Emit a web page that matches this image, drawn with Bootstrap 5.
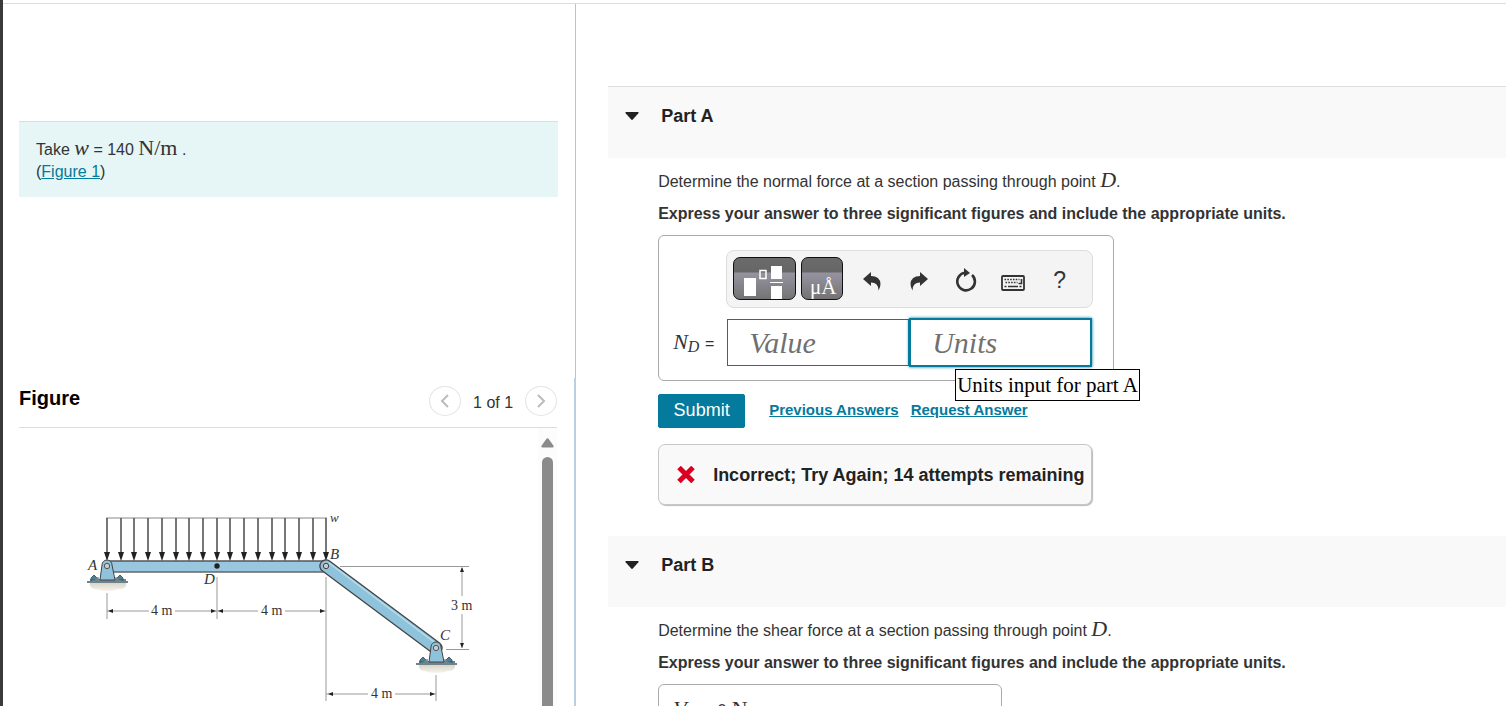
<!DOCTYPE html>
<html lang="en">
<head>
<meta charset="utf-8">
<meta name="viewport" content="width=device-width, initial-scale=1">
<title>Part A - Normal force at D</title>
<link href="https://cdn.jsdelivr.net/npm/bootstrap@5.3.0/dist/css/bootstrap.min.css" rel="stylesheet">
<style>
:root { --teal: #047a9c; }
body { font-family: "Liberation Sans", Arial, sans-serif; font-size: 16px; line-height: 22px; color: #333; background: #fff; border-left: 3px solid #3a3a3a; }
a { color: var(--teal); }
.topline { height: 4px; border-bottom: 1px solid #ddd; }
.left-col { width: 38%; }
.intro-pane { height: 53vh; padding: 117px 17px 0 16px; border-right: 1px solid #b6c3d6; margin-right: -2px; }
.figure-pane { border-right: 2px solid #bccfe0; padding: 0 17px 0 16px; margin-right: -2px; }
.intro-box { background: #e6f5f6; border-top: 1px solid #d0e0e4; padding: 16px 17px; height: 76px; }
.math { font-family: "Liberation Serif", "Times New Roman", serif; font-size: 22px; line-height: 20px; }
.math-sub { font-size: 16px; position: relative; top: 3px; }
.math-num { font-family: "Liberation Sans", Arial, sans-serif; font-size: 16px; }
.fig-head { height: 50px; border-bottom: 1px solid #ddd; padding-bottom: 4px; }
.fig-head h2 { font-size: 20px; line-height: 24px; color: #000; padding-bottom: 6px; }
.nav-round { width: 32px; height: 30px; border: 1px solid #e3e3e3; border-radius: 50%; background: #fff; }
.fig-art { padding: 72px 0 0 56px; }
.scroll-rail { width: 19px; background: #fcfcfc; padding-top: 10px; }
.scroll-thumb { width: 11px; background: #8b8b8b; border-radius: 6px 6px 0 0; margin-top: 9px; }
.right-col { padding: 82px 0 0 34px; }
.part-head { height: 71px; background: #f9f9f9; padding: 18px 17px; gap: 22px; }
.part-head-line { height: 72px; border-top: 1px solid #ddd; }
.part-head h2 { font-size: 18px; line-height: 22px; color: #222; }
.part-head svg { margin-top: 7px; }
.part-body { padding: 12px 16px 0 50px; }
.prompt { margin-bottom: 10px; line-height: 22px; }
.answer-box { border: 1px solid #aaa; border-radius: 6px; }
.answer-a { width: 456px; height: 146px; padding: 14px 20px 0 14px; }
.answer-b { width: 344px; height: 80px; padding: 14px; }
.toolbar { width: 367px; height: 58px; margin-left: 53px; background: #f4f4f4; border: 1px solid #ddd; border-radius: 8px; padding: 0 6px; }
.tool-dark { height: 43px; border: 1px solid #111; border-radius: 7px; background: linear-gradient(#6b6b6b 0, #666 14px, #9693a0 15px, #727272 42px); padding: 0; margin-bottom: 2px; overflow: hidden; }
.tool-wide { width: 63px; }
.tool-narrow { width: 42px; margin-left: 5px; }
.tool-plain { width: 47px; height: 43px; padding: 2px 0 0; border: 0; background: none; color: #333; }
.tool-first { margin-left: 5px; }
.help-mark { font-size: 23px; }
.field-row { margin-top: 10px; }
.field-label { width: 54px; }
.field { height: 47px; width: 182px; border: 1px solid var(--teal); border-radius: 0; padding: 0 21px; font: italic 30px/44px "Liberation Serif", "Times New Roman", serif; color: #333; outline: 0; }
.field::placeholder { color: #707070; opacity: 1; }
.field-on { height: 49px; width: 183px; border-width: 2px; box-shadow: 0 0 3px var(--teal); }
.field-tip { position: absolute; left: 46px; top: 51px; border: 1px solid #000; background: #fff; color: #000; font: 21px/30px "Liberation Serif", "Times New Roman", serif; padding: 0 1px; white-space: nowrap; z-index: 3; }
.action-row { margin-top: 13px; }
.btn-submit { --bs-btn-color: #fff; --bs-btn-bg: #047a9c; --bs-btn-border-color: #047a9c; --bs-btn-hover-color: #fff; --bs-btn-hover-bg: #036682; width: 87px; height: 34px; border-radius: 2px; font-size: 18px; line-height: 20px; padding: 0 0 2px; }
.act-link { font-size: 15px; line-height: 20px; font-weight: 700; padding-bottom: 2px; }
.act-gap { margin-left: 12px; }
.result { width: 434px; height: 61px; background: #f9f9f9; border: 1px solid #c7c7c7; border-radius: 7px; box-shadow: 1px 1px 1px #bbb; padding: 0 16px 0 18px; font-size: 18px; font-weight: 700; color: #222; margin: 16px 0 31px; gap: 18px; white-space: nowrap; }
</style>
</head>
<body>
<div class="vh-100 d-flex flex-column overflow-hidden">
  <header class="topline flex-shrink-0"></header>
  <main class="d-flex flex-grow-1 overflow-hidden">
    <section class="left-col d-flex flex-column flex-shrink-0">
      <div class="intro-pane flex-shrink-0">
        <div class="intro-box">
          <div>Take <i class="math">w</i> = 140 <span class="math">N/m</span> .</div>
          <div>(<a href="#figure">Figure 1</a>)</div>
        </div>
      </div>
      <div class="figure-pane flex-grow-1 d-flex flex-column overflow-hidden" id="figure">
        <div class="fig-head d-flex align-items-center justify-content-between flex-shrink-0">
          <h2 class="fw-bold m-0">Figure</h2>
          <div class="d-flex align-items-center">
            <button class="nav-round p-0 d-flex align-items-center justify-content-center" aria-label="Previous figure"><svg width="10" height="14" viewBox="0 0 10 14" fill="none" stroke="#bbb" stroke-width="2"><path d="M8 1 2 7l6 6"/></svg></button>
            <span class="px-2 mx-1 pt-1">1 of 1</span>
            <button class="nav-round p-0 d-flex align-items-center justify-content-center" aria-label="Next figure"><svg width="10" height="14" viewBox="0 0 10 14" fill="none" stroke="#bbb" stroke-width="2"><path d="m2 1 6 6-6 6"/></svg></button>
          </div>
        </div>
        <div class="d-flex flex-grow-1 justify-content-between overflow-hidden">
          <div class="fig-art">
            <svg width="410" height="206" viewBox="75 500 410 206" font-family="Liberation Serif, serif" fill="#333" role="img" aria-label="Beam ABC with distributed load w">
              <defs>
                <path id="ah" d="M-3 0H3L0 9Z"/>
                <g id="load"><path d="M0 518v36" stroke="#555" stroke-width="1.6"/><use href="#ah" y="552" fill="#222"/></g>
                <linearGradient id="sand" x2="0" y2="1"><stop stop-color="#d9d5c8"/><stop offset="1" stop-color="#f6f4ee"/></linearGradient>
                <g id="pin">
                  <path d="M-17 17h36q1 6-7 6-12 4-24 0-6-1-5-6Z" fill="url(#sand)"/>
                  <path d="M-16 15v-3l3-3 3 3h2M8 12h2l3-3 3 3v3" fill="#4d8091" stroke="#46606b"/>
                  <path d="M-17 14h36M-20 16h41" stroke="#3f5b66" stroke-width="1.5"/>
                  <path d="M-7 14-5-1a5 5 0 0 1 10 0l3 15Z" fill="#8fc3dc" stroke="#444"/>
                  <circle r="2.7" fill="#ccc" stroke="#555"/>
                </g>
              </defs>
              <path d="M106 518h221" stroke="#888"/>
              <path d="M106 561h220v11H106Z" fill="#98c7df"/>
              <path d="M106 561h220" stroke="#555" stroke-width="1.6"/><path d="M106 572h220" stroke="#666" stroke-width="1.6"/>
              <g>
                <use href="#load" x="107"/><use href="#load" x="121"/><use href="#load" x="134"/><use href="#load" x="148"/><use href="#load" x="162"/><use href="#load" x="176"/><use href="#load" x="189"/><use href="#load" x="203"/><use href="#load" x="217"/><use href="#load" x="230"/><use href="#load" x="244"/><use href="#load" x="258"/><use href="#load" x="272"/><use href="#load" x="285"/><use href="#load" x="299"/><use href="#load" x="313"/><use href="#load" x="326"/>
              </g>
              <path d="m329.500 561 110 82a5 5 0 0 1-7 10l-110-82a6 6 0 0 1 7-10Z" fill="#8fc3dc" stroke="#444" stroke-width="1.300"/>
              <path d="m329 563 109 82" stroke="#b9deed" stroke-width="1.500"/>
              <circle cx="326" cy="566" r="2.700" fill="#ccc" stroke="#444"/>
              <use href="#pin" x="107" y="566"/><use href="#pin" x="436" y="648"/>
              <circle cx="217" cy="566" r="2.700" fill="#222"/>
              <g stroke="#999" fill="none">
                <path d="M107 593v26M217 577v42M326 577v124M436 675v26M340 566.500h129M446 649.500h23M107 611h42M175 611h83M285 611h41M326 694h42M395 694h41M462 568v28M462 614v34"/>
              </g>
              <path d="m108 611 5-2v4ZM216 611l-5-2v4ZM218 611l5-2v4ZM325 611l-5-2v4ZM328 694l5-2v4ZM435 694l-5-2v4ZM462 567l-2 5h4ZM462 648l-2-5h4Z" fill="#222"/>
              <g font-size="15" font-style="italic">
                <text x="88" y="570">A</text><text x="204" y="584">D</text><text x="330" y="559">B</text><text x="440" y="640">C</text><text x="330" y="522" font-size="13">w</text>
              </g>
              <g font-size="14">
                <text x="151" y="615">4 m</text><text x="261" y="615">4 m</text><text x="371" y="698">4 m</text><text x="451" y="610">3 m</text>
              </g>
            </svg>
          </div>
          <div class="scroll-rail d-flex flex-column align-items-center flex-shrink-0">
            <svg width="13" height="10" viewBox="0 0 13 10" fill="#8b8b8b" class="flex-shrink-0"><path d="M5.500.800q1-1.200 2 0l5 7q.6 1.700-1 1.700h-10q-1.600 0-1-1.700Z"/></svg>
            <div class="scroll-thumb flex-grow-1"></div>
          </div>
        </div>
      </div>
    </section>

    <section class="right-col flex-grow-1">
      <div class="part-head part-head-line d-flex align-items-start">
        <svg width="14" height="8" viewBox="0 0 14 8" fill="#222" class="flex-shrink-0"><path d="M1 0h12q1 .5.400 1.300L7.800 7.500q-.8.800-1.600 0L.6 1.300Q0 .5 1 0Z"/></svg>
        <h2 class="fw-bold m-0">Part A</h2>
      </div>
      <div class="part-body">
        <p class="prompt">Determine the normal force at a section passing through point <i class="math">D</i>.</p>
        <p class="prompt fw-bold">Express your answer to three significant figures and include the appropriate units.</p>
        <div class="answer-box answer-a">
          <div class="toolbar d-flex align-items-center">
            <button class="tool-dark tool-wide" aria-label="Templates"><svg width="61" height="41" viewBox="0 0 61 41" class="d-block" fill="#fff"><path d="M10 20h12v18H10zM37 8h11v13H37zM37 28h11v13H37zM36 24h13v1H36z"/><path d="M26 12.500h6v8h-6z" fill="none" stroke="#fff" stroke-width="1.500"/></svg></button>
            <button class="tool-dark tool-narrow" aria-label="Units"><svg width="40" height="41" viewBox="0 0 40 41" class="d-block" fill="#fff" font-family="Liberation Serif, serif"><text x="8" y="36" font-size="21">μÅ</text></svg></button>
            <button class="tool-plain tool-first" aria-label="Undo"><svg width="18" height="20" viewBox="0 0 18 20" fill="#333"><path d="M0 8 8 1v4q9 0 9.500 8 0 3-2 6.500 0-8-7.500-8V15Z"/></svg></button>
            <button class="tool-plain" aria-label="Redo"><svg width="18" height="20" viewBox="0 0 18 20" fill="#333"><path d="M18 8 10 1v4Q1 5 .5 13q0 3 2 6.500 0-8 7.500-8V15Z"/></svg></button>
            <button class="tool-plain" aria-label="Reset"><svg width="22" height="24" viewBox="0 0 22 24"><path d="M10 4.800A8.800 8.800 0 1 0 17 7" fill="none" stroke="#333" stroke-width="2.600"/><path d="m9 0 6 5-6 4Z" fill="#333"/></svg></button>
            <button class="tool-plain" aria-label="Keyboard"><svg width="24" height="16" viewBox="0 0 24 16" fill="none" stroke="#333" class="mt-1"><rect x="1" y="1" width="22" height="14" rx="1" stroke-width="1.800"/><path d="M3.500 4.500h15M4.500 7.500h12" stroke-width="1.600" stroke-dasharray="1.600 1.200"/><path d="M20.500 4v4.500h-3M3.500 11.500h2M7 11.500h10M18.500 11.500h2" stroke-width="1.600"/></svg></button>
            <button class="tool-plain help-mark" aria-label="Help">?</button>
          </div>
          <div class="field-row d-flex align-items-center">
            <label class="field-label math text-nowrap" for="value"><i>N<span class="math-sub">D</span></i> <span class="math-num">=</span></label>
            <input class="field" id="value" placeholder="Value">
            <div class="position-relative">
              <input class="field field-on d-block" id="units" placeholder="Units" aria-label="Units input for part A">
              <div class="field-tip">Units input for part A</div>
            </div>
          </div>
        </div>
        <div class="action-row d-flex align-items-center">
          <button class="btn btn-submit">Submit</button>
          <a class="act-link ms-4" href="#previous">Previous Answers</a>
          <a class="act-link act-gap" href="#request">Request Answer</a>
        </div>
        <div class="result d-flex align-items-center">
          <svg width="18" height="17" viewBox="0 0 18 17" class="flex-shrink-0" stroke="#db0020" stroke-width="5"><path d="m2 1.500 14 14M16 1.500l-14 14"/></svg>
          <span>Incorrect; Try Again; 14 attempts remaining</span>
        </div>
      </div>
      <div class="part-head d-flex align-items-start">
        <svg width="14" height="8" viewBox="0 0 14 8" fill="#222" class="flex-shrink-0"><path d="M1 0h12q1 .5.400 1.300L7.800 7.500q-.8.800-1.600 0L.6 1.300Q0 .5 1 0Z"/></svg>
        <h2 class="fw-bold m-0">Part B</h2>
      </div>
      <div class="part-body">
        <p class="prompt">Determine the shear force at a section passing through point <i class="math">D</i>.</p>
        <p class="prompt fw-bold">Express your answer to three significant figures and include the appropriate units.</p>
        <div class="answer-box answer-b"><span class="math"><i>V<span class="math-sub">D</span></i> <span class="math-num">= 0</span> N</span></div>
      </div>
    </section>
  </main>
</div>
<script src="https://cdn.jsdelivr.net/npm/bootstrap@5.3.0/dist/js/bootstrap.bundle.min.js"></script>
</body>
</html>
